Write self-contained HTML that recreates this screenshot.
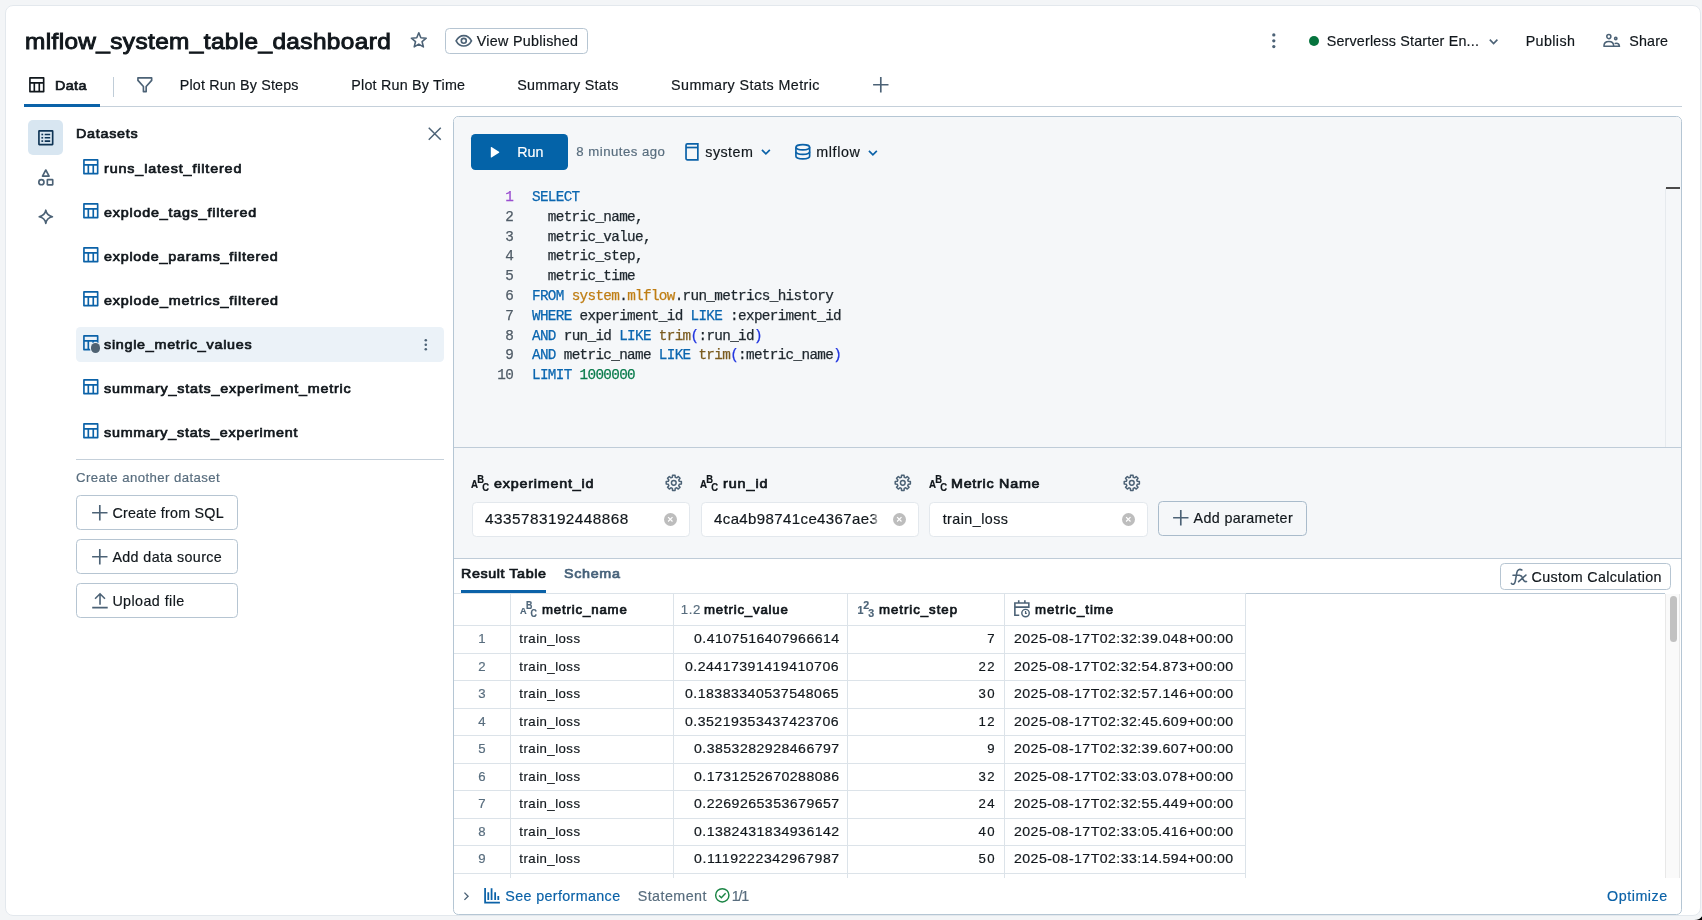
<!DOCTYPE html>
<html lang="en"><head><meta charset="utf-8"><title>mlflow_system_table_dashboard</title>
<style>
html,body{margin:0;padding:0}
body{width:1702px;height:920px;overflow:hidden;position:relative;background:#F3F5F7;font-family:"Liberation Sans", sans-serif;color:#11171C}
.b{position:absolute;box-sizing:content-box}
.t{position:absolute;white-space:pre;line-height:20px;font-size:14.3px;font-family:"Liberation Sans", sans-serif;-webkit-text-stroke:0.18px}
.ic{position:absolute;display:block;overflow:visible}
.code{position:absolute;white-space:pre;font-family:"Liberation Mono", monospace;font-size:14.3px;line-height:19.8px;letter-spacing:-0.656px;-webkit-text-stroke:0.25px}
#L{position:absolute;left:0;top:0;width:1702px;height:920px;will-change:transform}
</style></head><body>
<div id="L">
<div class="b" style="left:5px;top:5px;width:1694px;height:909px;background:#fff;border:1px solid #E3E8ED;border-radius:8px"></div>
<svg class="ic" style="left:1690px;top:908px;width:12px;height:12px" viewBox="0 0 12 12"><path fill="#000" d="M4.300 12Q10 11.600 12 8.200V12z"/></svg>
<div class="t" style="left:24.96px;top:31px;font-size:22.8px;letter-spacing:0.349px;-webkit-text-stroke:0.96px #11171C;transform:scaleX(1.07);transform-origin:0 0;">mlflow_system_table_dashboard</div>
<svg class="ic" style="left:410.00px;top:31.20px;width:17.6px;height:17.6px;color:#4C6276;" viewBox="0 0 16 16" fill="currentColor"><path fill="none" stroke="currentColor" stroke-width="1.45" stroke-linejoin="round" d="M8.00 1.65L9.85 6.20L14.75 6.56L11.00 9.72L12.17 14.49L8.00 11.90L3.83 14.49L5.00 9.72L1.25 6.56L6.15 6.20z"/></svg>
<div class="b" style="left:445px;top:28px;width:140.5px;height:24px;border:1px solid #B6C5D2;border-radius:4.4px;background:#fff"></div>
<svg class="ic" style="left:454.70px;top:32.00px;width:17.6px;height:17.6px;color:#4C6276;" viewBox="0 0 16 16" fill="currentColor"><path fill="none" stroke="currentColor" stroke-width="1.5" d="M1 8c1.6-3 4-4.75 7-4.75S13.4 5 15 8c-1.6 3-4 4.75-7 4.75S2.6 11 1 8z"/><circle cx="8" cy="8" r="2.25" fill="none" stroke="currentColor" stroke-width="1.5"/></svg>
<div class="t" style="left:476.79px;top:31px;font-size:14.3px;letter-spacing:0.286px;">View Published</div>
<svg class="ic" style="left:1264.90px;top:31.90px;width:17.6px;height:17.6px;color:#4C6276;" viewBox="0 0 16 16" fill="currentColor"><circle cx="8" cy="2.7" r="1.5"/><circle cx="8" cy="8" r="1.5"/><circle cx="8" cy="13.3" r="1.5"/></svg>
<div class="b" style="left:1309px;top:35.8px;width:10px;height:10px;border-radius:50%;background:#06743E"></div>
<div class="t" style="left:1326.69px;top:31px;font-size:14.3px;letter-spacing:0.192px;">Serverless Starter En...</div>
<svg class="ic" style="left:1485.90px;top:33.70px;width:15.2px;height:15.2px;color:#4C6276;" viewBox="0 0 16 16" fill="currentColor"><path fill="none" stroke="currentColor" stroke-width="1.7" d="M4 6l4 4 4-4"/></svg>
<div class="t" style="left:1525.69px;top:31px;font-size:14.3px;letter-spacing:0.385px;">Publish</div>
<svg class="ic" style="left:1603.00px;top:31.70px;width:17.6px;height:17.6px;color:#4C6276;" viewBox="0 0 16 16" fill="currentColor"><g fill="none" stroke="currentColor" stroke-width="1.4"><circle cx="5.3" cy="4.2" r="1.85"/><path d="M.85 13c0-2.7 1.7-4.3 4.45-4.300s4.450 1.6 4.450 4.300z" stroke-linejoin="round"/><circle cx="11.6" cy="5.9" r="1.05"/><path d="M10.6 10.6c.4-.25.8-.35 1.300-.35 1.9 0 3 1.100 3 2.750h-5.2"/></g></svg>
<div class="t" style="left:1629.29px;top:31px;font-size:14.3px;letter-spacing:0.140px;">Share</div>
<div class="b" style="left:24px;top:106px;width:1658px;height:1px;background:#C5D0DA"></div>
<div class="b" style="left:24px;top:103.7px;width:76px;height:3.3px;background:#0B62A8"></div>
<svg class="ic" style="left:28.00px;top:76.00px;width:17.6px;height:17.6px;color:#11171C;" viewBox="0 0 16 16" fill="currentColor"><path fill-rule="evenodd" d="M1 1.75A.75.75 0 0 1 1.75 1h12.5a.75.75 0 0 1 .75.75v12.5a.75.75 0 0 1-.75.75H1.75a.75.75 0 0 1-.75-.75zm1.5.75v3h11v-3zm0 11V7H5v6.5zm4 0h3V7h-3zM11 7v6.5h2.5V7z"/></svg>
<div class="t" style="left:54.83px;top:76px;font-size:13.59px;letter-spacing:0.364px;-webkit-text-stroke:0.7px #11171C;transform:scaleX(1.055);transform-origin:0 0;">Data</div>
<div class="b" style="left:113px;top:77px;width:1px;height:20px;background:#C0CDD8"></div>
<svg class="ic" style="left:136.00px;top:76.10px;width:17.6px;height:17.6px;color:#4C6276;" viewBox="0 0 16 16" fill="currentColor"><path fill="none" stroke="currentColor" stroke-width="1.5" stroke-linejoin="round" d="M1.75 1.75h12.5V4L9.25 9.6v4.65h-2.5V9.6L1.75 4z"/></svg>
<div class="t" style="left:179.78px;top:75px;font-size:14.3px;letter-spacing:0.168px;">Plot Run By Steps</div>
<div class="t" style="left:351.29px;top:75px;font-size:14.3px;letter-spacing:0.217px;">Plot Run By Time</div>
<div class="t" style="left:517.28px;top:75px;font-size:14.3px;letter-spacing:0.291px;">Summary Stats</div>
<div class="t" style="left:671.08px;top:75px;font-size:14.3px;letter-spacing:0.411px;">Summary Stats Metric</div>
<svg class="ic" style="left:871.90px;top:75.70px;width:17.6px;height:17.6px;color:#4C6276;" viewBox="0 0 16 16" fill="currentColor"><path fill="none" stroke="currentColor" stroke-width="1.5" d="M8 1v14M1 8h14"/></svg>
<div class="b" style="left:28px;top:120px;width:35px;height:35px;background:#D8E6F1;border-radius:5px"></div>
<svg class="ic" style="left:36.90px;top:129.00px;width:17.6px;height:17.6px;color:#0E3455;" viewBox="0 0 16 16" fill="currentColor"><g fill="none" stroke="currentColor" stroke-width="1.5"><rect x="1.75" y="1.75" width="12.5" height="12.5" rx=".3"/><path d="M7 5h5M7 8h5M7 11h5"/></g><rect x="4" y="4.25" width="1.6" height="1.5"/><rect x="4" y="7.25" width="1.6" height="1.5"/><rect x="4" y="10.25" width="1.6" height="1.5"/></svg>
<svg class="ic" style="left:37.00px;top:168.60px;width:17.6px;height:17.6px;color:#4C6276;" viewBox="0 0 16 16" fill="currentColor"><g fill="none" stroke="currentColor" stroke-width="1.5" stroke-linejoin="round"><path d="M8 .9l3 5.600H5z"/><circle cx="4" cy="12" r="2.350"/><rect x="9.400" y="9.600" width="4.900" height="4.800" rx=".3"/></g></svg>
<svg class="ic" style="left:37.00px;top:208.00px;width:17.6px;height:17.6px;color:#4C6276;" viewBox="0 0 16 16" fill="currentColor"><path fill="none" stroke="currentColor" stroke-width="1.5" stroke-linejoin="round" d="M8 2c.5 3.300 2.200 5.100 6 6-3.800.9-5.500 2.700-6 6-.5-3.300-2.200-5.100-6-6 3.800-.9 5.500-2.700 6-6z"/></svg>
<div class="t" style="left:76.43px;top:124px;font-size:13.59px;letter-spacing:0.688px;-webkit-text-stroke:0.7px #11171C;transform:scaleX(1.055);transform-origin:0 0;">Datasets</div>
<svg class="ic" style="left:427.25px;top:126.15px;width:15.5px;height:15.5px;color:#4C6276;" viewBox="0 0 16 16" fill="currentColor"><path fill="none" stroke="currentColor" stroke-width="1.5" d="M1.8 1.8l12.4 12.4M14.2 1.8L1.8 14.2"/></svg>
<div class="b" style="left:76px;top:327px;width:368px;height:34.8px;background:#EBF2F8;border-radius:4.4px"></div>
<svg class="ic" style="left:81.85px;top:158.10px;width:17.6px;height:17.6px;color:#0B62A8;" viewBox="0 0 16 16" fill="currentColor"><path fill-rule="evenodd" d="M1 1.75A.75.75 0 0 1 1.75 1h12.5a.75.75 0 0 1 .75.75v12.5a.75.75 0 0 1-.75.75H1.75a.75.75 0 0 1-.75-.75zm1.5.75v3h11v-3zm0 11V7H5v6.5zm4 0h3V7h-3zM11 7v6.5h2.5V7z"/></svg>
<div class="t" style="left:103.83px;top:159px;font-size:13.59px;letter-spacing:0.817px;-webkit-text-stroke:0.7px #11171C;transform:scaleX(1.055);transform-origin:0 0;">runs_latest_filtered</div>
<svg class="ic" style="left:81.85px;top:202.05px;width:17.6px;height:17.6px;color:#0B62A8;" viewBox="0 0 16 16" fill="currentColor"><path fill-rule="evenodd" d="M1 1.75A.75.75 0 0 1 1.75 1h12.5a.75.75 0 0 1 .75.75v12.5a.75.75 0 0 1-.75.75H1.75a.75.75 0 0 1-.75-.75zm1.5.75v3h11v-3zm0 11V7H5v6.5zm4 0h3V7h-3zM11 7v6.5h2.5V7z"/></svg>
<div class="t" style="left:103.83px;top:203px;font-size:13.59px;letter-spacing:0.755px;-webkit-text-stroke:0.7px #11171C;transform:scaleX(1.055);transform-origin:0 0;">explode_tags_filtered</div>
<svg class="ic" style="left:81.85px;top:246.00px;width:17.6px;height:17.6px;color:#0B62A8;" viewBox="0 0 16 16" fill="currentColor"><path fill-rule="evenodd" d="M1 1.75A.75.75 0 0 1 1.75 1h12.5a.75.75 0 0 1 .75.75v12.5a.75.75 0 0 1-.75.75H1.75a.75.75 0 0 1-.75-.75zm1.5.75v3h11v-3zm0 11V7H5v6.5zm4 0h3V7h-3zM11 7v6.5h2.5V7z"/></svg>
<div class="t" style="left:103.83px;top:247px;font-size:13.59px;letter-spacing:0.725px;-webkit-text-stroke:0.7px #11171C;transform:scaleX(1.055);transform-origin:0 0;">explode_params_filtered</div>
<svg class="ic" style="left:81.85px;top:289.95px;width:17.6px;height:17.6px;color:#0B62A8;" viewBox="0 0 16 16" fill="currentColor"><path fill-rule="evenodd" d="M1 1.75A.75.75 0 0 1 1.75 1h12.5a.75.75 0 0 1 .75.75v12.5a.75.75 0 0 1-.75.75H1.75a.75.75 0 0 1-.75-.75zm1.5.75v3h11v-3zm0 11V7H5v6.5zm4 0h3V7h-3zM11 7v6.5h2.5V7z"/></svg>
<div class="t" style="left:103.83px;top:291px;font-size:13.59px;letter-spacing:0.773px;-webkit-text-stroke:0.7px #11171C;transform:scaleX(1.055);transform-origin:0 0;">explode_metrics_filtered</div>
<svg class="ic" style="left:81.85px;top:333.90px;width:17.6px;height:17.6px;color:#0B62A8;" viewBox="0 0 16 16" fill="currentColor"><path fill-rule="evenodd" d="M1 1.75A.75.75 0 0 1 1.75 1h12.5a.75.75 0 0 1 .75.75v12.5a.75.75 0 0 1-.75.75H1.75a.75.75 0 0 1-.75-.75zm1.5.75v3h11v-3zm0 11V7H5v6.5zm4 0h3V7h-3zM11 7v6.5h2.5V7z"/></svg>
<div class="t" style="left:103.83px;top:335px;font-size:13.59px;letter-spacing:0.691px;-webkit-text-stroke:0.7px #11171C;transform:scaleX(1.055);transform-origin:0 0;">single_metric_values</div>
<svg class="ic" style="left:81.85px;top:377.85px;width:17.6px;height:17.6px;color:#0B62A8;" viewBox="0 0 16 16" fill="currentColor"><path fill-rule="evenodd" d="M1 1.75A.75.75 0 0 1 1.75 1h12.5a.75.75 0 0 1 .75.75v12.5a.75.75 0 0 1-.75.75H1.75a.75.75 0 0 1-.75-.75zm1.5.75v3h11v-3zm0 11V7H5v6.5zm4 0h3V7h-3zM11 7v6.5h2.5V7z"/></svg>
<div class="t" style="left:103.83px;top:379px;font-size:13.59px;letter-spacing:0.752px;-webkit-text-stroke:0.7px #11171C;transform:scaleX(1.055);transform-origin:0 0;">summary_stats_experiment_metric</div>
<svg class="ic" style="left:81.85px;top:421.80px;width:17.6px;height:17.6px;color:#0B62A8;" viewBox="0 0 16 16" fill="currentColor"><path fill-rule="evenodd" d="M1 1.75A.75.75 0 0 1 1.75 1h12.5a.75.75 0 0 1 .75.75v12.5a.75.75 0 0 1-.75.75H1.75a.75.75 0 0 1-.75-.75zm1.5.75v3h11v-3zm0 11V7H5v6.5zm4 0h3V7h-3zM11 7v6.5h2.5V7z"/></svg>
<div class="t" style="left:103.83px;top:423px;font-size:13.59px;letter-spacing:0.724px;-webkit-text-stroke:0.7px #11171C;transform:scaleX(1.055);transform-origin:0 0;">summary_stats_experiment</div>
<div class="b" style="left:89.9px;top:342.20000000000005px;width:11.6px;height:11.6px;border-radius:50%;background:#EBF2F8"></div>
<div class="b" style="left:90.9px;top:343.20000000000005px;width:9.6px;height:9.6px;border-radius:50%;background:#4F6272"></div>
<svg class="ic" style="left:418.70px;top:337.80px;width:13.6px;height:13.6px;color:#4C6276;" viewBox="0 0 16 16" fill="currentColor"><circle cx="8" cy="2.7" r="1.5"/><circle cx="8" cy="8" r="1.5"/><circle cx="8" cy="13.3" r="1.5"/></svg>
<div class="b" style="left:76px;top:459px;width:368px;height:1px;background:#C5D0DA"></div>
<div class="t" style="left:75.94px;top:468px;font-size:13.2px;color:#586D7E;letter-spacing:0.425px;">Create another dataset</div>
<div class="b" style="left:76px;top:495.2px;width:160px;height:32.5px;border:1px solid #B6C5D2;border-radius:4.4px;background:#fff"></div>
<svg class="ic" style="left:90.80px;top:503.90px;width:17.6px;height:17.6px;color:#4C6276;" viewBox="0 0 16 16" fill="currentColor"><path fill="none" stroke="currentColor" stroke-width="1.5" d="M8 1v14M1 8h14"/></svg>
<div class="t" style="left:112.38px;top:503px;font-size:14.3px;letter-spacing:0.225px;">Create from SQL</div>
<div class="b" style="left:76px;top:539.2px;width:160px;height:32.5px;border:1px solid #B6C5D2;border-radius:4.4px;background:#fff"></div>
<svg class="ic" style="left:90.80px;top:547.90px;width:17.6px;height:17.6px;color:#4C6276;" viewBox="0 0 16 16" fill="currentColor"><path fill="none" stroke="currentColor" stroke-width="1.5" d="M8 1v14M1 8h14"/></svg>
<div class="t" style="left:112.38px;top:547px;font-size:14.3px;letter-spacing:0.378px;">Add data source</div>
<div class="b" style="left:76px;top:583.2px;width:160px;height:32.5px;border:1px solid #B6C5D2;border-radius:4.4px;background:#fff"></div>
<svg class="ic" style="left:90.80px;top:591.90px;width:17.6px;height:17.6px;color:#4C6276;" viewBox="0 0 16 16" fill="currentColor"><path fill="none" stroke="currentColor" stroke-width="1.45" d="M1.100 14.200H15.200M8.200 11.500V1.800M3.700 6.100L8.200 1.600l4.500 4.500"/></svg>
<div class="t" style="left:112.38px;top:591px;font-size:14.3px;letter-spacing:0.425px;">Upload file</div>
<div class="b" style="left:453px;top:116px;width:1227px;height:797px;border:1px solid #B5C6D4;border-radius:5.3px;background:#fff;overflow:hidden"></div>
<div class="b" style="left:454px;top:117px;width:1227px;height:441px;background:#F5F7F9;border-radius:4.3px 4.3px 0 0"></div>
<div class="b" style="left:454px;top:447px;width:1227px;height:1px;background:#BFCCD8"></div>
<div class="b" style="left:454px;top:558px;width:1227px;height:1px;background:#BFCCD8"></div>
<div class="b" style="left:471px;top:134px;width:97px;height:36px;background:#0463A8;border-radius:4.4px"></div>
<svg class="ic" style="left:487.35px;top:144.85px;width:14.5px;height:14.5px;color:#fff;" viewBox="0 0 16 16" fill="currentColor"><path d="M4.2 2.6v10.8a.5.5 0 0 0 .77.42l8.3-5.4a.5.5 0 0 0 0-.84l-8.3-5.4a.5.5 0 0 0-.77.42z"/></svg>
<div class="t" style="left:517.28px;top:142px;font-size:14.3px;color:#fff;letter-spacing:-0.009px;">Run</div>
<div class="t" style="left:576.34px;top:142px;font-size:13.2px;color:#586D7E;letter-spacing:0.473px;">8 minutes ago</div>
<svg class="ic" style="left:683.00px;top:142.90px;width:17.6px;height:17.6px;color:#0B62A8;" viewBox="0 0 16 16" fill="currentColor"><g fill="none" stroke="currentColor" stroke-width="1.55" stroke-linejoin="miter"><path d="M2.750 14V2.100A1.250 1.250 0 0 1 4 .850H13.500V15.300H4A1.250 1.250 0 0 1 2.750 14z"/><path d="M2.750 4.100H13.500"/></g></svg>
<div class="t" style="left:705.28px;top:142px;font-size:14.3px;letter-spacing:0.467px;">system</div>
<svg class="ic" style="left:757.75px;top:144.45px;width:15.8px;height:15.8px;color:#0B62A8;" viewBox="0 0 16 16" fill="currentColor"><path fill="none" stroke="currentColor" stroke-width="1.7" d="M4 6l4 4 4-4"/></svg>
<svg class="ic" style="left:793.90px;top:142.90px;width:17.6px;height:17.6px;color:#0B62A8;" viewBox="0 0 16 16" fill="currentColor"><g fill="none" stroke="currentColor" stroke-width="1.5"><ellipse cx="8" cy="3.9" rx="6.25" ry="2.4"/><path d="M1.75 3.9v8.2c0 1.33 2.8 2.4 6.25 2.4s6.25-1.07 6.25-2.4V3.9"/><path d="M1.75 8c0 1.33 2.8 2.4 6.25 2.4s6.25-1.07 6.25-2.4"/></g></svg>
<div class="t" style="left:816.28px;top:142px;font-size:14.3px;letter-spacing:0.620px;">mlflow</div>
<svg class="ic" style="left:864.70px;top:144.50px;width:15.8px;height:15.8px;color:#0B62A8;" viewBox="0 0 16 16" fill="currentColor"><path fill="none" stroke="currentColor" stroke-width="1.7" d="M4 6l4 4 4-4"/></svg>
<div class="b" style="left:1665px;top:188px;width:1px;height:259px;background:#E6EAEE"></div>
<div class="b" style="left:1665.8px;top:187px;width:14.5px;height:2px;background:#4A4A4A"></div>
<div class="code" style="left:473.1px;top:188px;width:40px;text-align:right;color:#9A4FD0">1</div>
<div class="code" style="left:532px;top:188px;color:#1E272E"><span style="color:#0B66B0">SELECT</span></div>
<div class="code" style="left:473.1px;top:208px;width:40px;text-align:right;color:#4F5B66">2</div>
<div class="code" style="left:532px;top:208px;color:#1E272E">  metric_name,</div>
<div class="code" style="left:473.1px;top:228px;width:40px;text-align:right;color:#4F5B66">3</div>
<div class="code" style="left:532px;top:228px;color:#1E272E">  metric_value,</div>
<div class="code" style="left:473.1px;top:247px;width:40px;text-align:right;color:#4F5B66">4</div>
<div class="code" style="left:532px;top:247px;color:#1E272E">  metric_step,</div>
<div class="code" style="left:473.1px;top:267px;width:40px;text-align:right;color:#4F5B66">5</div>
<div class="code" style="left:532px;top:267px;color:#1E272E">  metric_time</div>
<div class="code" style="left:473.1px;top:287px;width:40px;text-align:right;color:#4F5B66">6</div>
<div class="code" style="left:532px;top:287px;color:#1E272E"><span style="color:#0B66B0">FROM</span> <span style="color:#BF7E14">system</span>.<span style="color:#BF7E14">mlflow</span>.run_metrics_history</div>
<div class="code" style="left:473.1px;top:307px;width:40px;text-align:right;color:#4F5B66">7</div>
<div class="code" style="left:532px;top:307px;color:#1E272E"><span style="color:#0B66B0">WHERE</span> experiment_id <span style="color:#0B66B0">LIKE</span> :experiment_id</div>
<div class="code" style="left:473.1px;top:327px;width:40px;text-align:right;color:#4F5B66">8</div>
<div class="code" style="left:532px;top:327px;color:#1E272E"><span style="color:#0B66B0">AND</span> run_id <span style="color:#0B66B0">LIKE</span> <span style="color:#7A5B1F">trim</span><span style="color:#2236E0">(</span>:run_id<span style="color:#2236E0">)</span></div>
<div class="code" style="left:473.1px;top:346px;width:40px;text-align:right;color:#4F5B66">9</div>
<div class="code" style="left:532px;top:346px;color:#1E272E"><span style="color:#0B66B0">AND</span> metric_name <span style="color:#0B66B0">LIKE</span> <span style="color:#7A5B1F">trim</span><span style="color:#2236E0">(</span>:metric_name<span style="color:#2236E0">)</span></div>
<div class="code" style="left:473.1px;top:366px;width:40px;text-align:right;color:#4F5B66">10</div>
<div class="code" style="left:532px;top:366px;color:#1E272E"><span style="color:#0B66B0">LIMIT</span> <span style="color:#0A7C4C">1000000</span></div>
<svg class="ic" style="left:471.40px;top:474.00px;width:17.6px;height:17.6px;color:#11171C;" viewBox="0 0 16 16" fill="currentColor"><g font-family="Liberation Sans" font-weight="700" stroke="currentColor" stroke-width="0.2"><text transform="translate(-0.1 12.700) scale(.93 1)" font-size="9.500">A</text><text transform="translate(5.700 7.900) scale(.84 1)" font-size="10.200">B</text><text transform="translate(10.200 15.200) scale(.84 1)" font-size="10.200">C</text></g></svg>
<div class="t" style="left:493.63px;top:474px;font-size:13.59px;letter-spacing:0.753px;-webkit-text-stroke:0.7px #11171C;transform:scaleX(1.055);transform-origin:0 0;">experiment_id</div>
<svg class="ic" style="left:664.70px;top:473.80px;width:17.6px;height:17.6px;color:#4C6276;" viewBox="0 0 16 16" fill="currentColor"><g fill="none" stroke="currentColor" stroke-width="1.35" stroke-linejoin="round"><path d="M6.70 2.97 L6.84 1.10 L9.16 1.10 L9.30 2.97 L10.64 3.52 L12.06 2.30 L13.70 3.94 L12.48 5.36 L13.03 6.70 L14.90 6.84 L14.90 9.16 L13.03 9.30 L12.48 10.64 L13.70 12.06 L12.06 13.70 L10.64 12.48 L9.30 13.03 L9.16 14.90 L6.84 14.90 L6.70 13.03 L5.36 12.48 L3.94 13.70 L2.30 12.06 L3.52 10.64 L2.97 9.30 L1.10 9.16 L1.10 6.84 L2.97 6.70 L3.52 5.36 L2.30 3.94 L3.94 2.30 L5.36 3.520z"/><circle cx="8" cy="8" r="2.15"/></g></svg>
<div class="b" style="left:471.6px;top:502.4px;width:216.8px;height:32.2px;border:1px solid #E3E8ED;border-radius:4.4px;background:#fff"></div>
<div class="t" style="left:484.83px;top:509px;font-size:14.3px;letter-spacing:0.446px;transform:scaleX(1.07);transform-origin:0 0;">4335783192448868</div>
<div class="b" style="left:664.0px;top:513px;width:13px;height:13px;border-radius:50%;background:#BDBDBD"></div>
<svg class="ic" style="left:667.20px;top:516.2px;width:6.6px;height:6.6px" viewBox="0 0 6 6"><path d="M1 1l4 4M5 1L1 5" stroke="#fff" stroke-width="1.1" fill="none"/></svg>
<svg class="ic" style="left:700.30px;top:474.00px;width:17.6px;height:17.6px;color:#11171C;" viewBox="0 0 16 16" fill="currentColor"><g font-family="Liberation Sans" font-weight="700" stroke="currentColor" stroke-width="0.2"><text transform="translate(-0.1 12.700) scale(.93 1)" font-size="9.500">A</text><text transform="translate(5.700 7.900) scale(.84 1)" font-size="10.200">B</text><text transform="translate(10.200 15.200) scale(.84 1)" font-size="10.200">C</text></g></svg>
<div class="t" style="left:722.53px;top:474px;font-size:13.59px;letter-spacing:0.890px;-webkit-text-stroke:0.7px #11171C;transform:scaleX(1.055);transform-origin:0 0;">run_id</div>
<svg class="ic" style="left:893.60px;top:473.80px;width:17.6px;height:17.6px;color:#4C6276;" viewBox="0 0 16 16" fill="currentColor"><g fill="none" stroke="currentColor" stroke-width="1.35" stroke-linejoin="round"><path d="M6.70 2.97 L6.84 1.10 L9.16 1.10 L9.30 2.97 L10.64 3.52 L12.06 2.30 L13.70 3.94 L12.48 5.36 L13.03 6.70 L14.90 6.84 L14.90 9.16 L13.03 9.30 L12.48 10.64 L13.70 12.06 L12.06 13.70 L10.64 12.48 L9.30 13.03 L9.16 14.90 L6.84 14.90 L6.70 13.03 L5.36 12.48 L3.94 13.70 L2.30 12.06 L3.52 10.64 L2.97 9.30 L1.10 9.16 L1.10 6.84 L2.97 6.70 L3.52 5.36 L2.30 3.94 L3.94 2.30 L5.36 3.520z"/><circle cx="8" cy="8" r="2.15"/></g></svg>
<div class="b" style="left:700.5px;top:502.4px;width:216.8px;height:32.2px;border:1px solid #E3E8ED;border-radius:4.4px;background:#fff"></div>
<div class="t" style="left:713.75px;top:509px;font-size:14.3px;letter-spacing:0.367px;transform:scaleX(1.05);transform-origin:0 0;width:157.6px;overflow:hidden;-webkit-mask-image:linear-gradient(90deg,#000 151px,transparent 157.6px)">4ca4b98741ce4367ae3</div>
<div class="b" style="left:892.9px;top:513px;width:13px;height:13px;border-radius:50%;background:#BDBDBD"></div>
<svg class="ic" style="left:896.10px;top:516.2px;width:6.6px;height:6.6px" viewBox="0 0 6 6"><path d="M1 1l4 4M5 1L1 5" stroke="#fff" stroke-width="1.1" fill="none"/></svg>
<svg class="ic" style="left:929.20px;top:474.00px;width:17.6px;height:17.6px;color:#11171C;" viewBox="0 0 16 16" fill="currentColor"><g font-family="Liberation Sans" font-weight="700" stroke="currentColor" stroke-width="0.2"><text transform="translate(-0.1 12.700) scale(.93 1)" font-size="9.500">A</text><text transform="translate(5.700 7.900) scale(.84 1)" font-size="10.200">B</text><text transform="translate(10.200 15.200) scale(.84 1)" font-size="10.200">C</text></g></svg>
<div class="t" style="left:951.43px;top:474px;font-size:13.59px;letter-spacing:0.694px;-webkit-text-stroke:0.7px #11171C;transform:scaleX(1.055);transform-origin:0 0;">Metric Name</div>
<svg class="ic" style="left:1122.50px;top:473.80px;width:17.6px;height:17.6px;color:#4C6276;" viewBox="0 0 16 16" fill="currentColor"><g fill="none" stroke="currentColor" stroke-width="1.35" stroke-linejoin="round"><path d="M6.70 2.97 L6.84 1.10 L9.16 1.10 L9.30 2.97 L10.64 3.52 L12.06 2.30 L13.70 3.94 L12.48 5.36 L13.03 6.70 L14.90 6.84 L14.90 9.16 L13.03 9.30 L12.48 10.64 L13.70 12.06 L12.06 13.70 L10.64 12.48 L9.30 13.03 L9.16 14.90 L6.84 14.90 L6.70 13.03 L5.36 12.48 L3.94 13.70 L2.30 12.06 L3.52 10.64 L2.97 9.30 L1.10 9.16 L1.10 6.84 L2.97 6.70 L3.52 5.36 L2.30 3.94 L3.94 2.30 L5.36 3.520z"/><circle cx="8" cy="8" r="2.15"/></g></svg>
<div class="b" style="left:929.4000000000001px;top:502.4px;width:216.8px;height:32.2px;border:1px solid #E3E8ED;border-radius:4.4px;background:#fff"></div>
<div class="t" style="left:942.69px;top:509px;font-size:14.3px;letter-spacing:0.446px;">train_loss</div>
<div class="b" style="left:1121.8000000000002px;top:513px;width:13px;height:13px;border-radius:50%;background:#BDBDBD"></div>
<svg class="ic" style="left:1125.00px;top:516.2px;width:6.6px;height:6.6px" viewBox="0 0 6 6"><path d="M1 1l4 4M5 1L1 5" stroke="#fff" stroke-width="1.1" fill="none"/></svg>
<div class="b" style="left:1158px;top:501.4px;width:147px;height:32.4px;border:1px solid #A9BBCB;border-radius:4.4px"></div>
<svg class="ic" style="left:1171.80px;top:509.20px;width:17.6px;height:17.6px;color:#4C6276;" viewBox="0 0 16 16" fill="currentColor"><path fill="none" stroke="currentColor" stroke-width="1.5" d="M8 1v14M1 8h14"/></svg>
<div class="t" style="left:1193.49px;top:508px;font-size:14.3px;letter-spacing:0.386px;">Add parameter</div>
<div class="t" style="left:461.23px;top:564px;font-size:13.59px;letter-spacing:0.546px;-webkit-text-stroke:0.7px #11171C;transform:scaleX(1.055);transform-origin:0 0;">Result Table</div>
<div class="t" style="left:563.63px;top:564px;font-size:13.59px;color:#47627A;letter-spacing:0.638px;-webkit-text-stroke:0.7px #47627A;transform:scaleX(1.055);transform-origin:0 0;">Schema</div>
<div class="b" style="left:461px;top:589.7px;width:85px;height:3.4px;background:#0B62A8"></div>
<div class="b" style="left:1500.4px;top:563px;width:168.5px;height:24.7px;border:1px solid #B6C5D2;border-radius:4.4px;background:#fff"></div>
<svg class="ic" style="left:1510px;top:568px;width:18px;height:18px;color:#4C6276" viewBox="0 0 18 18"><path fill="none" stroke="currentColor" stroke-width="1.6" stroke-linecap="round" stroke-linejoin="round" d="M1.4 15.4C2.4 16.9 4.6 16.600 5.2 13.6L6.900 4.300C7.4 1.600 9.600 .7 11.8 2M3 7.300H9.800M8.600 13.600L15.900 7.100M10.200 7.600C11.600 7.400 12 8.600 12.700 10.500S14.200 14 16.500 13.500"/></svg>
<div class="t" style="left:1531.59px;top:567px;font-size:14.3px;letter-spacing:0.350px;">Custom Calculation</div>
<div class="b" style="left:454px;top:593px;width:791.4px;height:1px;background:#DCE3E9"></div>
<div class="b" style="left:1245.4px;top:593px;width:420px;height:1px;background:#B9C8D5"></div>
<div class="b" style="left:510px;top:593px;width:1px;height:284.6px;background:#DCE3E9"></div>
<div class="b" style="left:673px;top:593px;width:1px;height:284.6px;background:#DCE3E9"></div>
<div class="b" style="left:847px;top:593px;width:1px;height:284.6px;background:#DCE3E9"></div>
<div class="b" style="left:1004px;top:593px;width:1px;height:284.6px;background:#DCE3E9"></div>
<div class="b" style="left:1245px;top:593px;width:1px;height:284.6px;background:#DCE3E9"></div>
<div class="b" style="left:454px;top:625px;width:792px;height:1px;background:#DCE3E9"></div>
<div class="b" style="left:454px;top:653px;width:792px;height:1px;background:#DCE3E9"></div>
<div class="b" style="left:454px;top:680px;width:792px;height:1px;background:#DCE3E9"></div>
<div class="b" style="left:454px;top:708px;width:792px;height:1px;background:#DCE3E9"></div>
<div class="b" style="left:454px;top:735px;width:792px;height:1px;background:#DCE3E9"></div>
<div class="b" style="left:454px;top:763px;width:792px;height:1px;background:#DCE3E9"></div>
<div class="b" style="left:454px;top:790px;width:792px;height:1px;background:#DCE3E9"></div>
<div class="b" style="left:454px;top:818px;width:792px;height:1px;background:#DCE3E9"></div>
<div class="b" style="left:454px;top:845px;width:792px;height:1px;background:#DCE3E9"></div>
<div class="b" style="left:454px;top:873px;width:792px;height:1px;background:#DCE3E9"></div>
<svg class="ic" style="left:520.40px;top:600.70px;width:16.6px;height:16.6px;color:#4F667A;" viewBox="0 0 16 16" fill="currentColor"><g font-family="Liberation Sans" font-weight="700" stroke="currentColor" stroke-width="0.2"><text transform="translate(-0.1 12.700) scale(.93 1)" font-size="9.500">A</text><text transform="translate(5.700 7.900) scale(.84 1)" font-size="10.200">B</text><text transform="translate(10.200 15.200) scale(.84 1)" font-size="10.200">C</text></g></svg>
<div class="t" style="left:541.69px;top:600px;font-size:12.54px;letter-spacing:0.796px;-webkit-text-stroke:0.7px #11171C;transform:scaleX(1.055);transform-origin:0 0;">metric_name</div>
<div class="t" style="left:680.84px;top:600px;font-size:13.2px;color:#586D7E;letter-spacing:0.539px;">1.2</div>
<div class="t" style="left:704.29px;top:600px;font-size:12.54px;letter-spacing:0.764px;-webkit-text-stroke:0.7px #11171C;transform:scaleX(1.055);transform-origin:0 0;">metric_value</div>
<svg class="ic" style="left:858.20px;top:600.90px;width:16.6px;height:16.6px;color:#4F667A;" viewBox="0 0 16 16" fill="currentColor"><g font-family="Liberation Sans" font-weight="700" font-size="10.3" stroke="currentColor" stroke-width="0.2"><text x="-0.4" y="12.5">1</text><text x="5.1" y="7.4">2</text><text x="10" y="15.1">3</text></g></svg>
<div class="t" style="left:879.09px;top:600px;font-size:12.54px;letter-spacing:0.918px;-webkit-text-stroke:0.7px #11171C;transform:scaleX(1.055);transform-origin:0 0;">metric_step</div>
<svg class="ic" style="left:1013.00px;top:599.80px;width:17.6px;height:17.6px;color:#4C6276;" viewBox="0 0 16 16" fill="currentColor"><g fill="none" stroke="currentColor" stroke-width="1.45"><path d="M5.7 13.8H1.7V2.7H14.4V6.450H1.7M5.2 .2V2.7M10.8 .2V2.7"/><circle cx="11.4" cy="11.9" r="3.4" stroke-width="1.3"/><path d="M11.4 10.100v2h1.2" stroke-width="1.1"/></g></svg>
<div class="t" style="left:1035.29px;top:600px;font-size:12.54px;letter-spacing:0.938px;-webkit-text-stroke:0.7px #11171C;transform:scaleX(1.055);transform-origin:0 0;">metric_time</div>
<div class="t" style="left:478.23px;top:629px;font-size:13.2px;color:#586D7E;">1</div>
<div class="t" style="left:519.34px;top:629px;font-size:13.2px;letter-spacing:0.474px;">train_loss</div>
<div class="t" style="left:693.51px;top:629px;font-size:13.2px;letter-spacing:0.432px;transform:scaleX(1.07);transform-origin:0 0;">0.4107516407966614</div>
<div class="t" style="left:987.32px;top:629px;font-size:13.2px;">7</div>
<div class="t" style="left:1013.69px;top:629px;font-size:13.2px;letter-spacing:0.416px;transform:scaleX(1.07);transform-origin:0 0;">2025-08-17T02:32:39.048+00:00</div>
<div class="t" style="left:478.23px;top:657px;font-size:13.2px;color:#586D7E;">2</div>
<div class="t" style="left:519.34px;top:657px;font-size:13.2px;letter-spacing:0.474px;">train_loss</div>
<div class="t" style="left:685.11px;top:657px;font-size:13.2px;letter-spacing:0.437px;transform:scaleX(1.07);transform-origin:0 0;">0.24417391419410706</div>
<div class="t" style="left:978.54px;top:657px;font-size:13.2px;letter-spacing:1.450px;">22</div>
<div class="t" style="left:1013.69px;top:657px;font-size:13.2px;letter-spacing:0.416px;transform:scaleX(1.07);transform-origin:0 0;">2025-08-17T02:32:54.873+00:00</div>
<div class="t" style="left:478.23px;top:684px;font-size:13.2px;color:#586D7E;">3</div>
<div class="t" style="left:519.34px;top:684px;font-size:13.2px;letter-spacing:0.474px;">train_loss</div>
<div class="t" style="left:685.11px;top:684px;font-size:13.2px;letter-spacing:0.437px;transform:scaleX(1.07);transform-origin:0 0;">0.18383340537548065</div>
<div class="t" style="left:978.54px;top:684px;font-size:13.2px;letter-spacing:1.450px;">30</div>
<div class="t" style="left:1013.69px;top:684px;font-size:13.2px;letter-spacing:0.416px;transform:scaleX(1.07);transform-origin:0 0;">2025-08-17T02:32:57.146+00:00</div>
<div class="t" style="left:478.23px;top:712px;font-size:13.2px;color:#586D7E;">4</div>
<div class="t" style="left:519.34px;top:712px;font-size:13.2px;letter-spacing:0.474px;">train_loss</div>
<div class="t" style="left:685.11px;top:712px;font-size:13.2px;letter-spacing:0.437px;transform:scaleX(1.07);transform-origin:0 0;">0.35219353437423706</div>
<div class="t" style="left:978.54px;top:712px;font-size:13.2px;letter-spacing:1.450px;">12</div>
<div class="t" style="left:1013.69px;top:712px;font-size:13.2px;letter-spacing:0.416px;transform:scaleX(1.07);transform-origin:0 0;">2025-08-17T02:32:45.609+00:00</div>
<div class="t" style="left:478.23px;top:739px;font-size:13.2px;color:#586D7E;">5</div>
<div class="t" style="left:519.34px;top:739px;font-size:13.2px;letter-spacing:0.474px;">train_loss</div>
<div class="t" style="left:693.51px;top:739px;font-size:13.2px;letter-spacing:0.432px;transform:scaleX(1.07);transform-origin:0 0;">0.3853282928466797</div>
<div class="t" style="left:987.32px;top:739px;font-size:13.2px;">9</div>
<div class="t" style="left:1013.69px;top:739px;font-size:13.2px;letter-spacing:0.416px;transform:scaleX(1.07);transform-origin:0 0;">2025-08-17T02:32:39.607+00:00</div>
<div class="t" style="left:478.23px;top:767px;font-size:13.2px;color:#586D7E;">6</div>
<div class="t" style="left:519.34px;top:767px;font-size:13.2px;letter-spacing:0.474px;">train_loss</div>
<div class="t" style="left:693.51px;top:767px;font-size:13.2px;letter-spacing:0.432px;transform:scaleX(1.07);transform-origin:0 0;">0.1731252670288086</div>
<div class="t" style="left:978.54px;top:767px;font-size:13.2px;letter-spacing:1.450px;">32</div>
<div class="t" style="left:1013.69px;top:767px;font-size:13.2px;letter-spacing:0.416px;transform:scaleX(1.07);transform-origin:0 0;">2025-08-17T02:33:03.078+00:00</div>
<div class="t" style="left:478.23px;top:794px;font-size:13.2px;color:#586D7E;">7</div>
<div class="t" style="left:519.34px;top:794px;font-size:13.2px;letter-spacing:0.474px;">train_loss</div>
<div class="t" style="left:693.51px;top:794px;font-size:13.2px;letter-spacing:0.432px;transform:scaleX(1.07);transform-origin:0 0;">0.2269265353679657</div>
<div class="t" style="left:978.54px;top:794px;font-size:13.2px;letter-spacing:1.450px;">24</div>
<div class="t" style="left:1013.69px;top:794px;font-size:13.2px;letter-spacing:0.416px;transform:scaleX(1.07);transform-origin:0 0;">2025-08-17T02:32:55.449+00:00</div>
<div class="t" style="left:478.23px;top:822px;font-size:13.2px;color:#586D7E;">8</div>
<div class="t" style="left:519.34px;top:822px;font-size:13.2px;letter-spacing:0.474px;">train_loss</div>
<div class="t" style="left:693.51px;top:822px;font-size:13.2px;letter-spacing:0.432px;transform:scaleX(1.07);transform-origin:0 0;">0.1382431834936142</div>
<div class="t" style="left:978.54px;top:822px;font-size:13.2px;letter-spacing:1.450px;">40</div>
<div class="t" style="left:1013.69px;top:822px;font-size:13.2px;letter-spacing:0.416px;transform:scaleX(1.07);transform-origin:0 0;">2025-08-17T02:33:05.416+00:00</div>
<div class="t" style="left:478.23px;top:849px;font-size:13.2px;color:#586D7E;">9</div>
<div class="t" style="left:519.34px;top:849px;font-size:13.2px;letter-spacing:0.474px;">train_loss</div>
<div class="t" style="left:693.51px;top:849px;font-size:13.2px;letter-spacing:0.548px;transform:scaleX(1.07);transform-origin:0 0;">0.1119222342967987</div>
<div class="t" style="left:978.54px;top:849px;font-size:13.2px;letter-spacing:1.450px;">50</div>
<div class="t" style="left:1013.69px;top:849px;font-size:13.2px;letter-spacing:0.416px;transform:scaleX(1.07);transform-origin:0 0;">2025-08-17T02:33:14.594+00:00</div>
<div class="b" style="left:1665px;top:594px;width:15px;height:284px;background:#FAFAFA;border-left:1px solid #E8E8E8;border-right:1px solid #E8E8E8;box-sizing:border-box"></div>
<div class="b" style="left:1669.5px;top:595.8px;width:7.6px;height:45.8px;background:#C1C1C1;border-radius:4px"></div>
<div class="b" style="left:454px;top:877.6px;width:1227px;height:31px;background:#fff"></div>
<svg class="ic" style="left:458.95px;top:888.55px;width:14.5px;height:14.5px;color:#4C6276;" viewBox="0 0 16 16" fill="currentColor"><path fill="none" stroke="currentColor" stroke-width="1.5" d="M6 4l4 4-4 4"/></svg>
<svg class="ic" style="left:482.80px;top:887.00px;width:17.6px;height:17.6px;color:#0B62A8;" viewBox="0 0 16 16" fill="currentColor"><path fill="none" stroke="currentColor" stroke-width="1.6" d="M1.9 1V14.3H15.4M4.8 11.9V4.8M7.8 11.9V1.2M11.05 11.9V4.8M13.9 11.9V8.2"/></svg>
<div class="t" style="left:505.29px;top:886px;font-size:14.3px;color:#0B62A8;letter-spacing:0.367px;">See performance</div>
<div class="t" style="left:637.68px;top:886px;font-size:14.3px;color:#586D7E;letter-spacing:0.455px;">Statement</div>
<svg class="ic" style="left:714.00px;top:887.40px;width:16.6px;height:16.6px;color:#1B8545;" viewBox="0 0 16 16" fill="currentColor"><g fill="none" stroke="currentColor" stroke-width="1.4"><circle cx="8" cy="8" r="6.4"/><path d="M4.9 8.2l2.2 2.2 4.1-4.3"/></g></svg>
<div class="t" style="left:731.68px;top:886px;font-size:14.3px;color:#586D7E;letter-spacing:-1.230px;">1/1</div>
<div class="t" style="left:1606.99px;top:886px;font-size:14.3px;color:#0B62A8;letter-spacing:0.544px;">Optimize</div>
</div>
</body></html>
